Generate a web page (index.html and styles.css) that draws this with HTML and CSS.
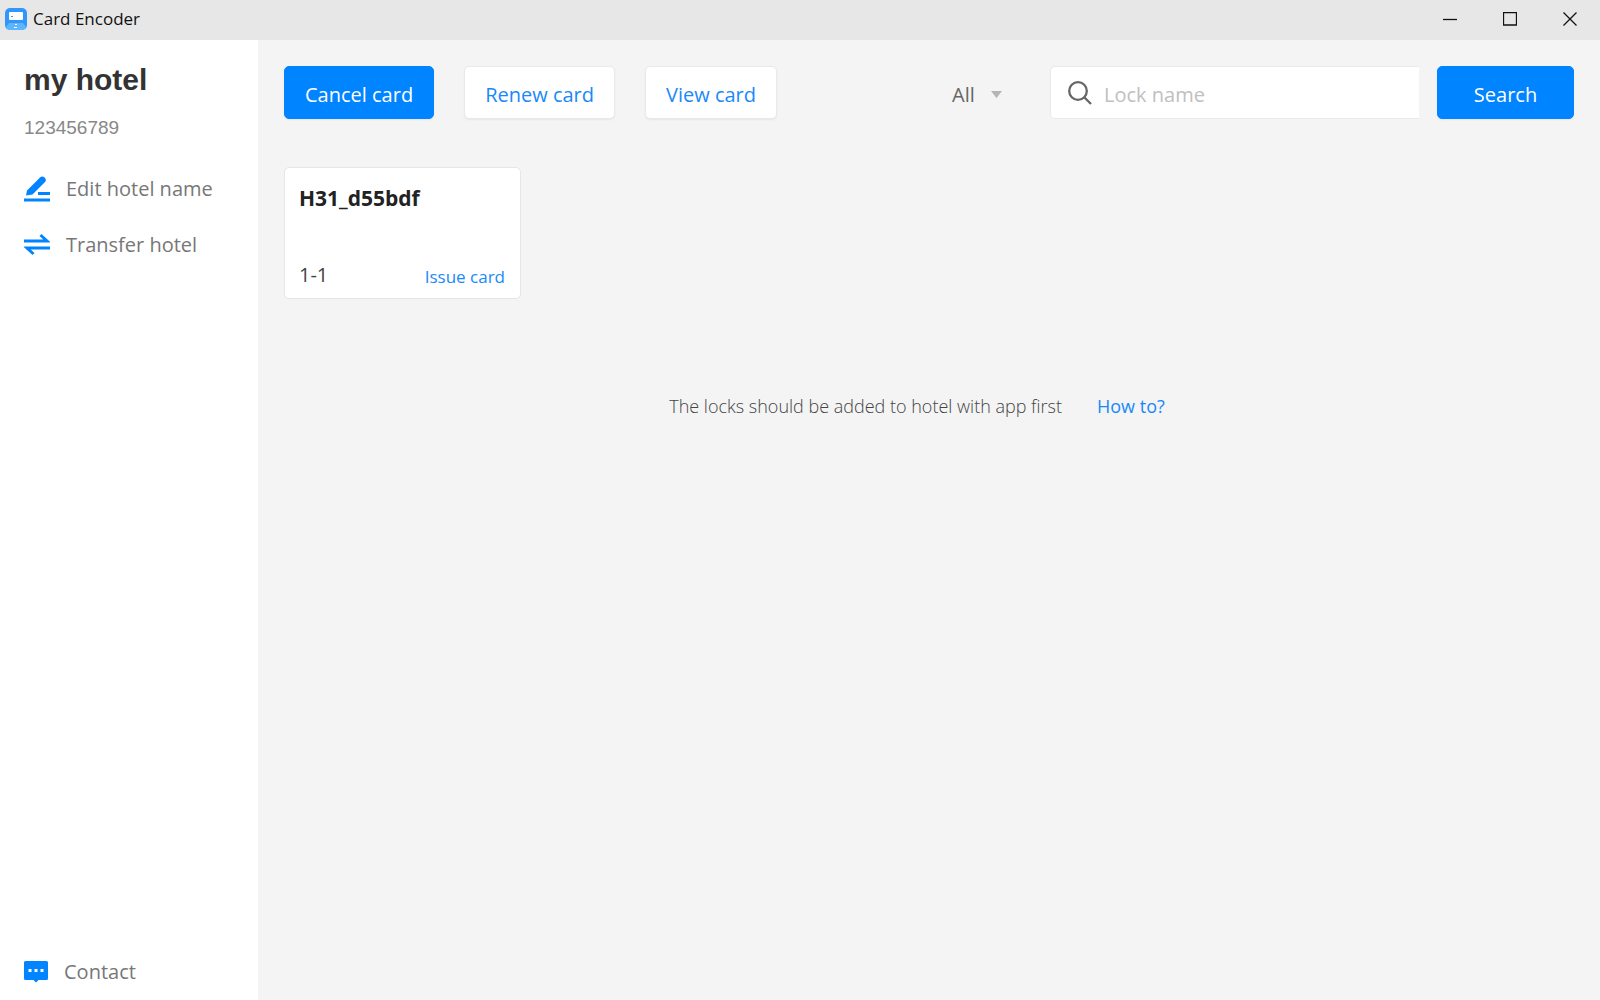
FILE: index.html
```html
<!DOCTYPE html>
<html lang="en">
<head>
<meta charset="utf-8">
<title>Card Encoder</title>
<link rel="stylesheet" href="styles.css">
</head>
<body>
<header class="titlebar">
  <svg class="app-icon" width="22" height="22" viewBox="0 0 22 22" aria-hidden="true">
    <rect width="22" height="22" rx="5" fill="#3396fb"/>
    <path d="M4 15h14l3 4q-1 3-4 3H5q-3 0-4-3z" fill="#5db6fd"/>
    <rect x="4" y="4" width="14" height="8" rx="1" fill="#fff"/>
    <path d="M6 8.500h2" stroke="#3396fb"/>
    <path d="M10 16.500h2M9 19.500h3" stroke="#fff"/>
  </svg>
  <span class="app-name">Card Encoder</span>
  <div class="window-controls">
    <button type="button" aria-label="Minimize"><svg width="14" height="14" viewBox="0 0 14 14"><path d="M0 7.500h14"/></svg></button>
    <button type="button" aria-label="Maximize"><svg width="14" height="14" viewBox="0 0 14 14"><path d="M.5.500h13v12.500H.5z"/></svg></button>
    <button type="button" aria-label="Close"><svg width="14" height="14" viewBox="0 0 14 14"><path d="M.5.500l13 13M13.500.500l-13 13"/></svg></button>
  </div>
</header>
<div class="layout">
  <aside class="sidebar">
    <h1 class="hotel-name">my hotel</h1>
    <p class="hotel-id">123456789</p>
    <nav class="menu">
      <a class="menu-item" href="#edit">
        <svg width="26" height="26" viewBox="0 0 26 26" aria-hidden="true">
          <path d="M2 19.500L3 14.500 16 1.500Q18-.5 20.500 1.500 23 3.500 21 6L8.500 18.500z" fill="#0084ff"/>
          <path d="M14 17.500h12M0 24h26" stroke="#0084ff" stroke-width="3"/>
        </svg>
        <span>Edit hotel name</span>
      </a>
      <a class="menu-item" href="#transfer">
        <svg width="26" height="26" viewBox="0 0 26 26" aria-hidden="true">
          <path d="M0 9h23L16.500 3M26 16H3l6.500 6" fill="none" stroke="#0084ff" stroke-width="3"/>
        </svg>
        <span>Transfer hotel</span>
      </a>
    </nav>
    <a class="menu-item contact" href="#contact">
      <svg width="24" height="22" viewBox="0 0 24 22" aria-hidden="true">
        <path d="M1.500 0h21Q24 0 24 1.500v16q0 1.500-1.500 1.500H14.500L12 21.500 9.500 19h-8Q0 19 0 17.500v-16Q0 0 1.500 0z" fill="#0084ff"/>
        <path d="M4.500 8h3v3h-3zM10.500 8h3v3h-3zM16.500 8h3v3h-3z" fill="#fff"/>
      </svg>
      <span>Contact</span>
    </a>
  </aside>
  <main class="main">
    <div class="toolbar">
      <div class="actions">
        <button type="button" class="btn btn-primary">Cancel card</button>
        <button type="button" class="btn">Renew card</button>
        <button type="button" class="btn">View card</button>
      </div>
      <form class="search">
        <label class="filter">
          <select aria-label="Filter"><option>All</option></select>
          <svg width="11" height="7" viewBox="0 0 11 7" aria-hidden="true"><path d="M0 0h11L5.500 7z" fill="#b5b5b5"/></svg>
        </label>
        <label class="search-box">
          <svg width="24" height="24" viewBox="0 0 24 24" aria-hidden="true"><g fill="none" stroke="#666" stroke-width="2.300"><circle cx="10" cy="10" r="8.800"/><path d="M16 16l7 7"/></g></svg>
          <input type="text" placeholder="Lock name" aria-label="Lock name">
        </label>
        <button type="button" class="btn btn-primary btn-search">Search</button>
      </form>
    </div>
    <section class="locks">
      <article class="lock-card">
        <h2>H31_d55bdf</h2>
        <div class="lock-footer">
          <span class="room">1-1</span>
          <a href="#issue">Issue card</a>
        </div>
      </article>
    </section>
    <p class="hint"><span>The locks should be added to hotel with app first</span><a href="#help">How to?</a></p>
  </main>
</div>
</body>
</html>
```
FILE: styles.css
```css
* { box-sizing: border-box; }

body {
  margin: 0;
  min-height: 100vh;
  display: flex;
  flex-direction: column;
  background: #f4f4f4;
  color: #666;
  font-family: "Open Sans", "Noto Sans", sans-serif;
}

h1, h2, p { margin: 0; }
a { color: #1989fa; text-decoration: none; }
button, input, select { font: inherit; }
svg { flex: none; }

.titlebar {
  height: 40px;
  padding-left: 5px;
  display: flex;
  align-items: center;
  gap: 6px;
  background: #e7e7e7;
}
.app-icon { margin-bottom: 3px; }
.app-name {
  color: #111;
  font-size: 17px;
  line-height: 24px;
  margin-bottom: 2px;
}
.window-controls { display: flex; margin-left: auto; }
.window-controls button {
  width: 60px;
  height: 40px;
  padding: 0 0 3px;
  border: 0;
  background: none;
  display: flex;
  align-items: center;
  justify-content: center;
}
.window-controls path { fill: none; stroke: #111; stroke-width: 1.3px; }

.layout { flex: 1; display: flex; }

.sidebar {
  width: 258px;
  flex: none;
  padding: 20px 0 12px 24px;
  background: #fff;
  display: flex;
  flex-direction: column;
  font-size: 20px;
}
.hotel-name {
  color: #333;
  font: bold 30px/40px "Liberation Sans", Arial, sans-serif;
}
.hotel-id {
  margin-top: 16px;
  color: #888;
  font: 19px/24px "Liberation Sans", Arial, sans-serif;
}
.menu {
  margin-top: 33px;
  display: flex;
  flex-direction: column;
  gap: 24px;
}
.menu-item {
  display: flex;
  align-items: center;
  gap: 16px;
  line-height: 32px;
  color: #777;
}
.contact { margin-top: auto; }

.main { flex: 1; min-width: 0; padding: 26px; }

.toolbar {
  display: flex;
  align-items: center;
  justify-content: space-between;
  gap: 24px;
  font-size: 20px;
}
.actions, .search { display: flex; align-items: center; }
.actions { gap: 30px; }
.btn {
  height: 53px;
  padding: 3px 20px 0;
  border: 1px solid #e9e9e9;
  border-radius: 5px;
  background: #fff;
  color: #1989fa;
  box-shadow: 0 1px 2px rgba(0, 0, 0, 0.06);
  white-space: nowrap;
}
.btn-primary { background: #0084ff; border-color: #0084ff; color: #fff; }
.btn-search { width: 137px; margin-left: 18px; }

.filter { display: flex; align-items: center; gap: 16px; margin-right: 48px; }
.filter svg { margin-top: 4px; }
.filter select {
  appearance: none;
  padding: 4px 0 0;
  border: 0;
  background: none;
  color: #666;
}
.search-box {
  width: 369px;
  height: 53px;
  padding-left: 17px;
  display: flex;
  align-items: center;
  gap: 12px;
  background: #fff;
  border: 1px solid #e9e9e9;
  border-right: 0;
  border-radius: 5px 0 0 5px;
}
.search-box input {
  flex: 1;
  min-width: 0;
  padding: 4px 0 0;
  border: 0;
  outline: 0;
  background: none;
}
.search-box input::placeholder { color: #c0c0c0; }

.locks { margin-top: 48px; display: flex; flex-wrap: wrap; gap: 30px; }
.lock-card {
  width: 237px;
  height: 132px;
  padding: 14px 15px 6px 14px;
  display: flex;
  flex-direction: column;
  justify-content: space-between;
  background: #fff;
  border: 1px solid #e6e6e6;
  border-radius: 5px;
}
.lock-card h2 { color: #222; font-size: 21px; line-height: 32px; }
.lock-footer {
  display: flex;
  align-items: center;
  justify-content: space-between;
  font-size: 17px;
  line-height: 28px;
}
.room { color: #444; font-size: 20px; padding-bottom: 3px; }

.hint {
  margin-top: 93px;
  padding-right: 24px;
  display: flex;
  justify-content: center;
  gap: 35px;
  font-size: 18px;
  line-height: 28px;
}
.hint span { color: #444; font-weight: 300; }
```
